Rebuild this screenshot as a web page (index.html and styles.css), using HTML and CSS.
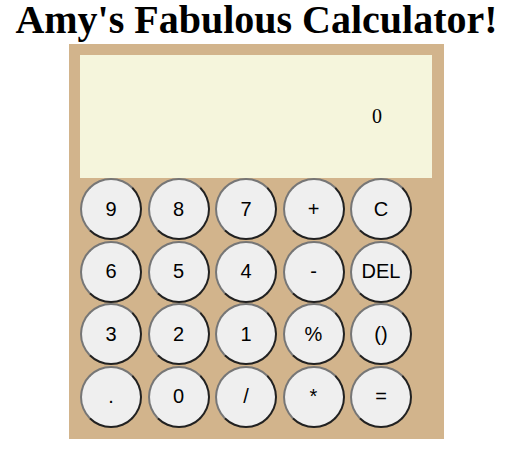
FILE: index.html
```html
<!DOCTYPE html>
<html>
<head>
<meta charset="utf-8">
<title>Amy's Fabulous Calculator!</title>
<link rel="stylesheet" href="styles.css">
</head>
<body>
<h1 class="title">Amy's Fabulous Calculator!</h1>
<div class="calc">
  <div class="display">0</div>
  <div class="keys">
    <button class="key">9</button>
    <button class="key">8</button>
    <button class="key">7</button>
    <button class="key">+</button>
    <button class="key">C</button>
    <button class="key">6</button>
    <button class="key">5</button>
    <button class="key">4</button>
    <button class="key">-</button>
    <button class="key">DEL</button>
    <button class="key">3</button>
    <button class="key">2</button>
    <button class="key">1</button>
    <button class="key">%</button>
    <button class="key">()</button>
    <button class="key">.</button>
    <button class="key">0</button>
    <button class="key">/</button>
    <button class="key">*</button>
    <button class="key">=</button>
  </div>
</div>
</body>
</html>
```
FILE: styles.css
```css
body {
  margin: 0 0 0 6px;
  font-family: "Liberation Serif", "Times New Roman", serif;
  background: #ffffff;
}

.title {
  margin: 0;
  font-size: 40px;
  line-height: 40px;
  font-weight: bold;
  text-align: center;
  color: #000000;
}

.calc {
  width: 375px;
  box-sizing: border-box;
  margin: 4px auto 0;
  padding: 11px 12px 11.5px 11px;
  background: #d2b48c;
}

.display {
  height: 123px;
  background: #f5f5dc;
  display: flex;
  align-items: center;
  justify-content: flex-end;
  padding-right: 50px;
  font-size: 20px;
}

.keys {
  display: grid;
  grid-template-columns: repeat(5, 62px);
  column-gap: 5.5px;
  row-gap: 0.5px;
}

.key {
  width: 62px;
  height: 62px;
  margin: 0;
  padding: 0;
  border-radius: 50%;
  border: 2px outset #767676;
  background: #efefef;
  color: #000000;
  font-family: "Liberation Sans", Arial, sans-serif;
  font-size: 20px;
}
```
